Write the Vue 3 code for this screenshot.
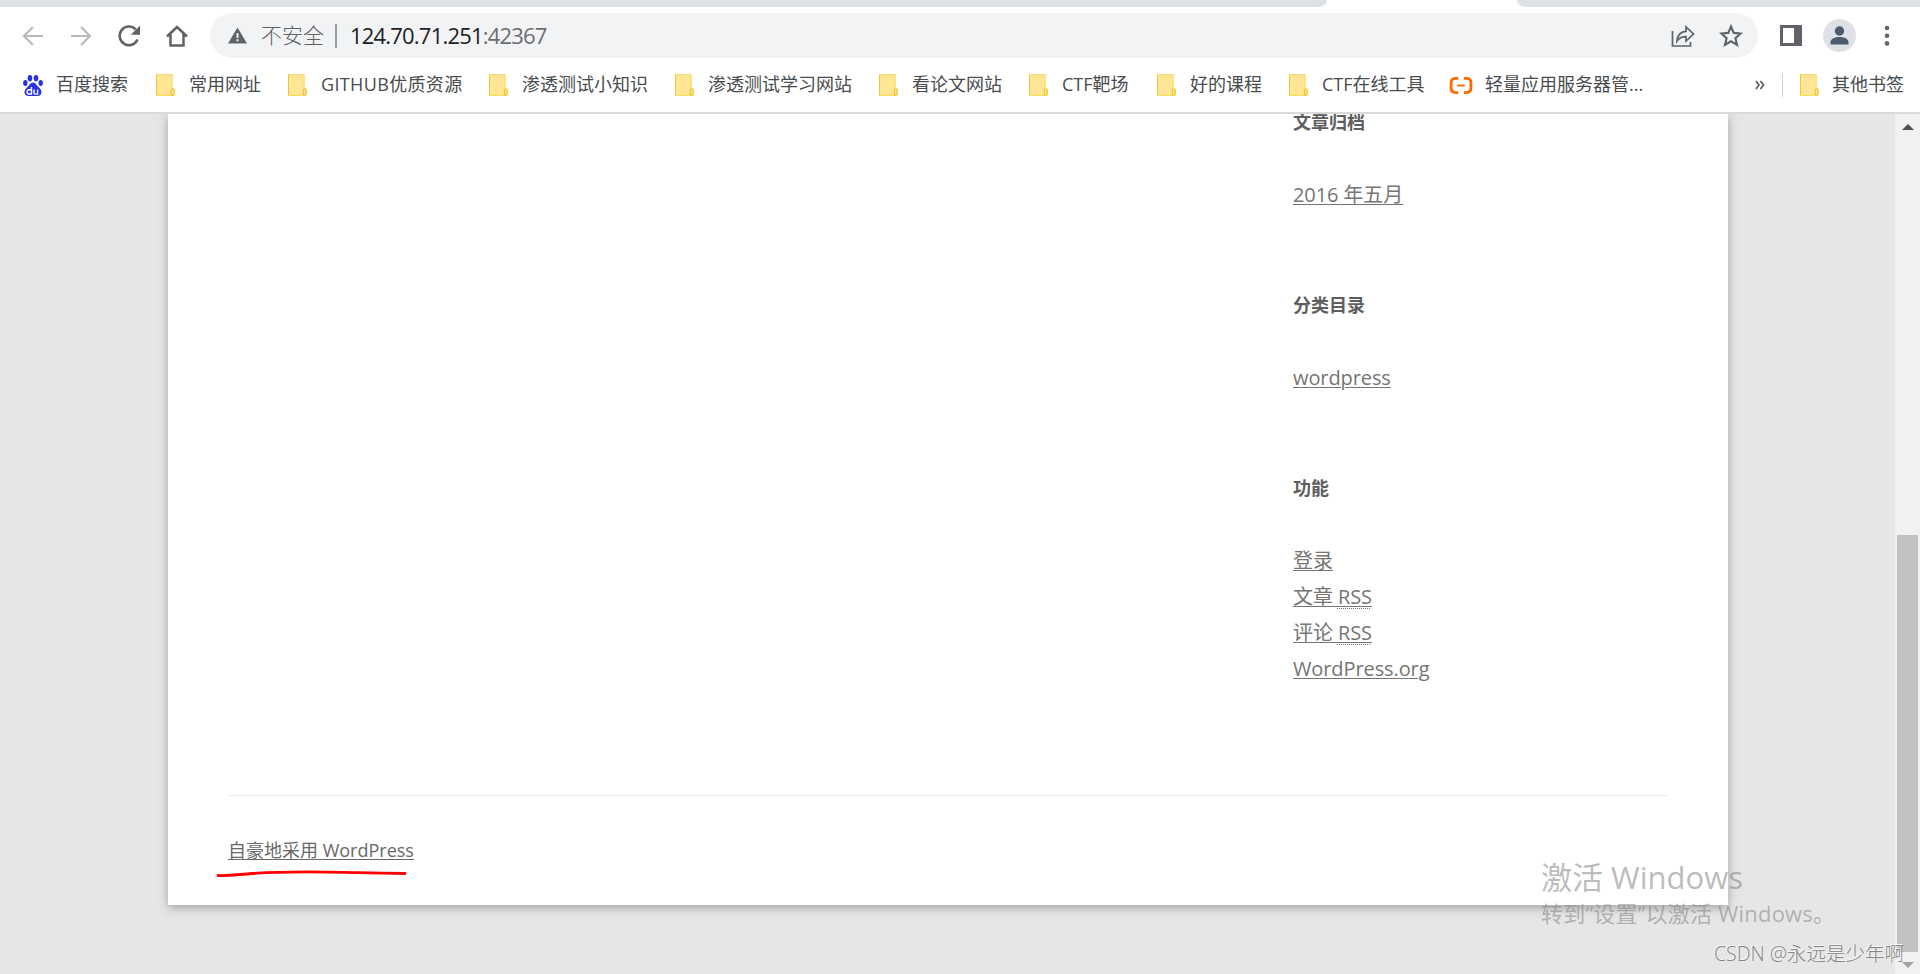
<template>
  <div class="browser">
    <!-- tab strip -->
    <div class="tabs">
      <div class="tab-left"></div>
      <div class="tab-right"></div>
    </div>

    <!-- toolbar -->
    <div class="toolbar">
      <div class="nav">
        <svg class="off" viewBox="0 0 24 24"><path d="M22 12H3M12 3L3 12l9 9" /></svg>
        <svg class="off" viewBox="0 0 24 24"><path d="M2 12h19M12 3l9 9-9 9" /></svg>
        <svg viewBox="0 0 24 24">
          <path d="M20.5 15.5A9.3 9.3 0 1 1 18.6 5.4" />
          <path class="fill" d="M23 1.5v9.2h-9.2z" />
        </svg>
        <svg viewBox="0 0 24 24"><path d="M2 12.5L12 3l10 9.500M5.500 10v11.500h13V10" /></svg>
      </div>

      <div class="omnibox">
        <svg class="warn" viewBox="0 0 20 17">
          <path d="M10 0l10 17H0z" fill="#5f6368" />
          <path d="M9 6h2v5H9zM9 12.500h2v2H9z" fill="#fff" />
        </svg>
        <span class="unsafe">不安全</span>
        <i class="bar"></i>
        <span class="url">124.70.71.251<em>:42367</em></span>
        <svg class="share" viewBox="0 0 24 24">
          <path d="M1.500 7v15h18v-4" />
          <path d="M6 17c.6-6.500 4-9.500 9-9.700V3l7.500 7-7.500 7v-4.300c-4-.1-6.700 1-9 4.300z" />
        </svg>
        <svg class="star" viewBox="0 0 24 24">
          <path d="M12 2.500l2.700 6.400 6.900.6-5.200 4.600 1.600 6.800-6-3.600-6 3.600 1.600-6.800-5.200-4.600 6.900-.6z" />
        </svg>
      </div>

      <div class="actions">
        <svg class="panel" viewBox="0 0 22 21">
          <path d="M0 0h22v21H0zM3 3v15h11V3z" fill="#5f6368" fill-rule="evenodd" />
        </svg>
        <svg class="avatar" viewBox="0 0 33 33">
          <circle cx="16.500" cy="16.500" r="16.500" fill="#dee1e6" />
          <circle cx="16.500" cy="12" r="4.700" fill="#4e5a6e" />
          <path d="M7.500 25.500v-2.300c0-3.300 4.500-5.200 9-5.200s9 1.900 9 5.200v2.300z" fill="#4e5a6e" />
        </svg>
        <svg class="dots" viewBox="0 0 6 22">
          <circle cx="3" cy="3" r="2.300" /><circle cx="3" cy="10.700" r="2.300" /><circle cx="3" cy="18.400" r="2.300" />
        </svg>
      </div>
    </div>

    <!-- bookmarks -->
    <div class="bookmarks">
      <div v-for="b in bookmarks" :key="b.text" class="mark" :style="{ width: b.width + 'px' }">
        <svg v-if="b.icon === 'baidu'" class="baidu" viewBox="0 0 20 21">
          <ellipse cx="2.300" cy="8" rx="2.200" ry="2.900" />
          <ellipse cx="7" cy="3.200" rx="2.300" ry="3.100" />
          <ellipse cx="13" cy="3.200" rx="2.300" ry="3.100" />
          <ellipse cx="17.700" cy="8" rx="2.200" ry="2.900" />
          <path d="M10 7.500c2.400 0 3.400 2.300 5 4 1.800 1.800 3.500 3 3.500 5.600 0 2.500-1.700 3.900-4 3.900h-9c-2.300 0-4-1.400-4-3.900C1.500 14.500 3.200 13.300 5 11.500c1.600-1.700 2.600-4 5-4z" />
          <path class="du" d="M8.500 12v7H6.300a1.900 1.900 0 0 1 0-4.200h2.200M11 14.500v3.200c0 1 .5 1.400 1.400 1.400h2.200v-4.600" />
        </svg>
        <svg v-else-if="b.icon === 'cloud'" class="cloud" viewBox="0 0 24 18">
          <path d="M9 1.500H6.500Q1.500 1.500 1.500 6v6q0 4.500 5 4.500H9M15 1.500h2.500q5 0 5 4.500v6q0 4.500-5 4.500H15" />
          <path d="M8 9h8" stroke-width="2" />
        </svg>
        <svg v-else class="folder" viewBox="0 0 19 22">
          <path d="M.5.500h15.700v14.500h2V21.500H.5z" fill="#ffe694" stroke="#fcd95b" />
          <path d="M.5.500h15.700" stroke="#f3d477" />
          <path d="M.5 1v20" stroke="#edc53e" />
          <path d="M15.300 21v-5q0-1.200 1.400-1.200t1.400 1.200v3.500q0 1.500-1.500 1.500z" fill="#ffe694" stroke="#e9bd2e" />
        </svg>
        <span :class="{ wide: b.wide }">{{ b.text }}</span>
      </div>
      <svg class="more" viewBox="0 0 10 10"><path d="M1 1l3 4-3 4M5.500 1l3 4-3 4" /></svg>
      <i class="split"></i>
      <div class="mark other">
        <svg class="folder" viewBox="0 0 19 22">
          <path d="M.5.500h15.700v14.500h2V21.500H.5z" fill="#ffe694" stroke="#fcd95b" />
          <path d="M.5.500h15.700" stroke="#f3d477" />
          <path d="M.5 1v20" stroke="#edc53e" />
          <path d="M15.300 21v-5q0-1.200 1.400-1.200t1.400 1.200v3.500q0 1.500-1.500 1.500z" fill="#ffe694" stroke="#e9bd2e" />
        </svg>
        <span>其他书签</span>
      </div>
    </div>

    <!-- page -->
    <div class="viewport">
      <div class="site">
        <aside>
          <section v-for="w in widgets" :key="w.title">
            <h3>{{ w.title }}</h3>
            <ul>
              <li v-for="l in w.links" :key="l.text">
                <a href="#">{{ l.text }}<abbr v-if="l.abbr">{{ l.abbr }}</abbr></a>
              </li>
            </ul>
          </section>
        </aside>
        <footer>
          <a href="#">自豪地采用 WordPress</a>
          <svg class="mark-line" viewBox="0 0 192 10">
            <path d="M2 7.500C15 8 22 6.500 36 5.500 78 2.500 110 4 142 4.700q25 .8 47 .8" />
          </svg>
        </footer>
      </div>

      <div class="scroll">
        <svg viewBox="0 0 12 6"><path d="M6 0l6 6H0z" fill="#505050" /></svg>
        <div class="thumb"></div>
        <svg viewBox="0 0 12 6"><path d="M0 0h12L6 6z" fill="#a3a3a3" /></svg>
      </div>
    </div>

    <div class="activate">
      <p class="big">激活 Windows</p>
      <p class="small">转到“设置”以激活 Windows。</p>
    </div>
    <div class="csdn">CSDN @永远是少年啊</div>
  </div>
</template>

<script setup>
const bookmarks = [
  { text: "百度搜索", width: 133, icon: "baidu" },
  { text: "常用网址", width: 132 },
  { text: "GITHUB优质资源", width: 201, wide: true },
  { text: "渗透测试小知识", width: 186 },
  { text: "渗透测试学习网站", width: 204 },
  { text: "看论文网站", width: 150 },
  { text: "CTF靶场", width: 128 },
  { text: "好的课程", width: 132 },
  { text: "CTF在线工具", width: 160 },
  { text: "轻量应用服务器管...", width: 220, icon: "cloud" }
];

const widgets = [
  { title: "文章归档", links: [{ text: "2016 年五月" }] },
  { title: "分类目录", links: [{ text: "wordpress" }] },
  {
    title: "功能",
    links: [
      { text: "登录" },
      { text: "文章 ", abbr: "RSS" },
      { text: "评论 ", abbr: "RSS" },
      { text: "WordPress.org" }
    ]
  }
];
</script>

<style>
body {
  margin: 0;
  overflow: hidden;
}
</style>

<style scoped>
.browser {
  position: relative;
  display: flex;
  flex-direction: column;
  width: 1920px;
  height: 974px;
  overflow: hidden;
  background: #fff;
  font-family: "Open Sans", "Noto Sans CJK SC", sans-serif;
}

svg {
  display: block;
  flex: none;
}

/* ---------- TABS ---------- */
.tabs {
  display: flex;
  justify-content: space-between;
  height: 7px;
}

.tab-left,
.tab-right {
  background: #dee1e6;
}

.tab-left {
  width: 1327px;
  border-bottom-right-radius: 9px 7px;
}

.tab-right {
  width: 403px;
  border-bottom-left-radius: 9px 7px;
}

/* ---------- TOOLBAR ---------- */
.toolbar {
  display: flex;
  align-items: center;
  height: 45px;
  padding: 6px 0 0;
}

.nav {
  display: flex;
  gap: 24px;
  width: 189px;
  padding-left: 21px;
}

.nav svg {
  width: 24px;
  height: 24px;
  fill: none;
  stroke: #5f6368;
  stroke-width: 2.5;
}

.nav .off {
  stroke: #bababc;
  stroke-width: 2.2;
}

.nav .fill {
  fill: #5f6368;
  stroke: none;
}

.omnibox {
  display: flex;
  align-items: center;
  box-sizing: border-box;
  width: 1548px;
  height: 45px;
  padding-left: 18px;
  border-radius: 23px;
  background: #f1f3f4;
  font-size: 21px;
  line-height: 43px;
}

.warn {
  width: 19px;
  height: 17px;
}

.unsafe {
  width: 74px;
  margin-left: 14px;
  color: #5f6368;
  font-weight: 300;
}

.bar {
  width: 2px;
  height: 24px;
  margin-right: 13px;
  background: #9a9da1;
}

.url {
  flex: 1;
  color: #202124;
  font-size: 22px;
  letter-spacing: -0.8px;
}

.url em {
  color: #6b6e72;
  font-style: normal;
}

.share,
.star {
  width: 24px;
  height: 24px;
  fill: none;
  stroke: #5f6368;
  stroke-width: 1.7;
}

.share {
  margin-right: 24px;
}

.star {
  margin-right: 15px;
  stroke-width: 2.1;
}

.actions {
  display: flex;
  align-items: center;
}

.panel {
  width: 22px;
  height: 21px;
  margin-left: 22px;
}

.avatar {
  width: 33px;
  height: 33px;
  margin-left: 21px;
}

.dots {
  width: 6px;
  height: 22px;
  margin-left: 28px;
  fill: #5f6368;
}

/* ---------- BOOKMARKS ---------- */
.bookmarks {
  display: flex;
  align-items: center;
  box-sizing: border-box;
  height: 56px;
  padding-left: 23px;
  border-bottom: 2px solid #dadada;
  color: #484c4f;
  font-size: 18px;
}

.mark {
  display: flex;
  flex: none;
  align-items: center;
  height: 54px;
  white-space: nowrap;
}

.mark span {
  padding-bottom: 2px;
  line-height: 50px;
}

.mark .wide {
  letter-spacing: 0.35px;
}

.folder {
  width: 19px;
  height: 22px;
  margin-right: 14px;
  fill: none;
}

.baidu {
  width: 20px;
  height: 21px;
  margin-right: 13px;
  fill: #2932e1;
}

.baidu .du {
  fill: none;
  stroke: #fff;
  stroke-width: 1.4;
}

.cloud {
  width: 24px;
  height: 17px;
  margin-right: 12px;
  fill: none;
  stroke: #ff6a00;
  stroke-width: 3;
}

.more {
  width: 10px;
  height: 10px;
  margin-left: 86px;
  fill: none;
  stroke: #5f6368;
  stroke-width: 1.8;
}

.split {
  width: 1px;
  height: 24px;
  margin: 0 17px 0 17px;
  background: #cfd1d4;
}

.other .folder {
  margin-right: 13px;
}

/* ---------- PAGE ---------- */
.viewport {
  display: flex;
  justify-content: space-between;
  height: 860px;
  overflow: hidden;
  background: #e6e6e6;
}

.site {
  display: flex;
  flex-direction: column;
  box-sizing: border-box;
  width: 1560px;
  height: 791px;
  margin-left: 168px;
  padding: 0 60px;
  background: #fff;
  box-shadow: 0 3px 9px rgba(100, 100, 100, 0.5);
}

aside {
  height: 681px;
  margin-left: 1065px;
  color: #757575;
}

section {
  padding-bottom: 74px;
}

section:first-child {
  margin-top: -10px;
}

h3 {
  margin: 0 0 37px;
  color: #5e5e5e;
  font-size: 18px;
  font-weight: 700;
  line-height: 36px;
}

ul {
  margin: 0;
  padding: 0;
  list-style: none;
}

li {
  height: 36px;
  font-size: 20px;
  letter-spacing: -0.1px;
  line-height: 36px;
  white-space: nowrap;
}

a {
  color: inherit;
  text-decoration: underline;
  text-decoration-thickness: 1px;
  text-underline-offset: 2px;
}

abbr {
  text-decoration: underline dotted;
  text-decoration-thickness: 1px;
  text-underline-offset: 4px;
}

footer {
  position: relative;
  border-top: 1px solid #ededed;
  padding-top: 36px;
  color: #686868;
  font-size: 18px;
  line-height: 36px;
}

.mark-line {
  position: absolute;
  left: -12px;
  top: 72px;
  width: 192px;
  height: 10px;
  fill: none;
  stroke: #f00;
  stroke-width: 2.8;
  stroke-linecap: round;
}

/* ---------- SCROLLBAR ---------- */
.scroll {
  display: flex;
  flex-direction: column;
  align-items: center;
  width: 25px;
  background: #f1f1f1;
}

.scroll svg {
  width: 12px;
  height: 6px;
  margin-top: 10px;
}

.thumb {
  width: 21px;
  height: 417px;
  margin-top: 405px;
  background: #c1c1c1;
}

/* ---------- OVERLAYS ---------- */
.activate {
  position: absolute;
  left: 1541px;
  top: 857px;
  color: rgba(130, 130, 130, 0.55);
  white-space: nowrap;
}

.activate p {
  margin: 0;
}

.big {
  font-size: 31px;
  line-height: 41px;
}

.small {
  font-size: 22px;
  letter-spacing: 0.2px;
  line-height: 31px;
}

.csdn {
  position: absolute;
  left: 1714px;
  top: 940px;
  color: #858585;
  font-size: 19.5px;
  font-weight: 300;
  line-height: 28px;
  text-shadow: -1px -1px 0 #f6f6f6;
  white-space: nowrap;
}
</style>
